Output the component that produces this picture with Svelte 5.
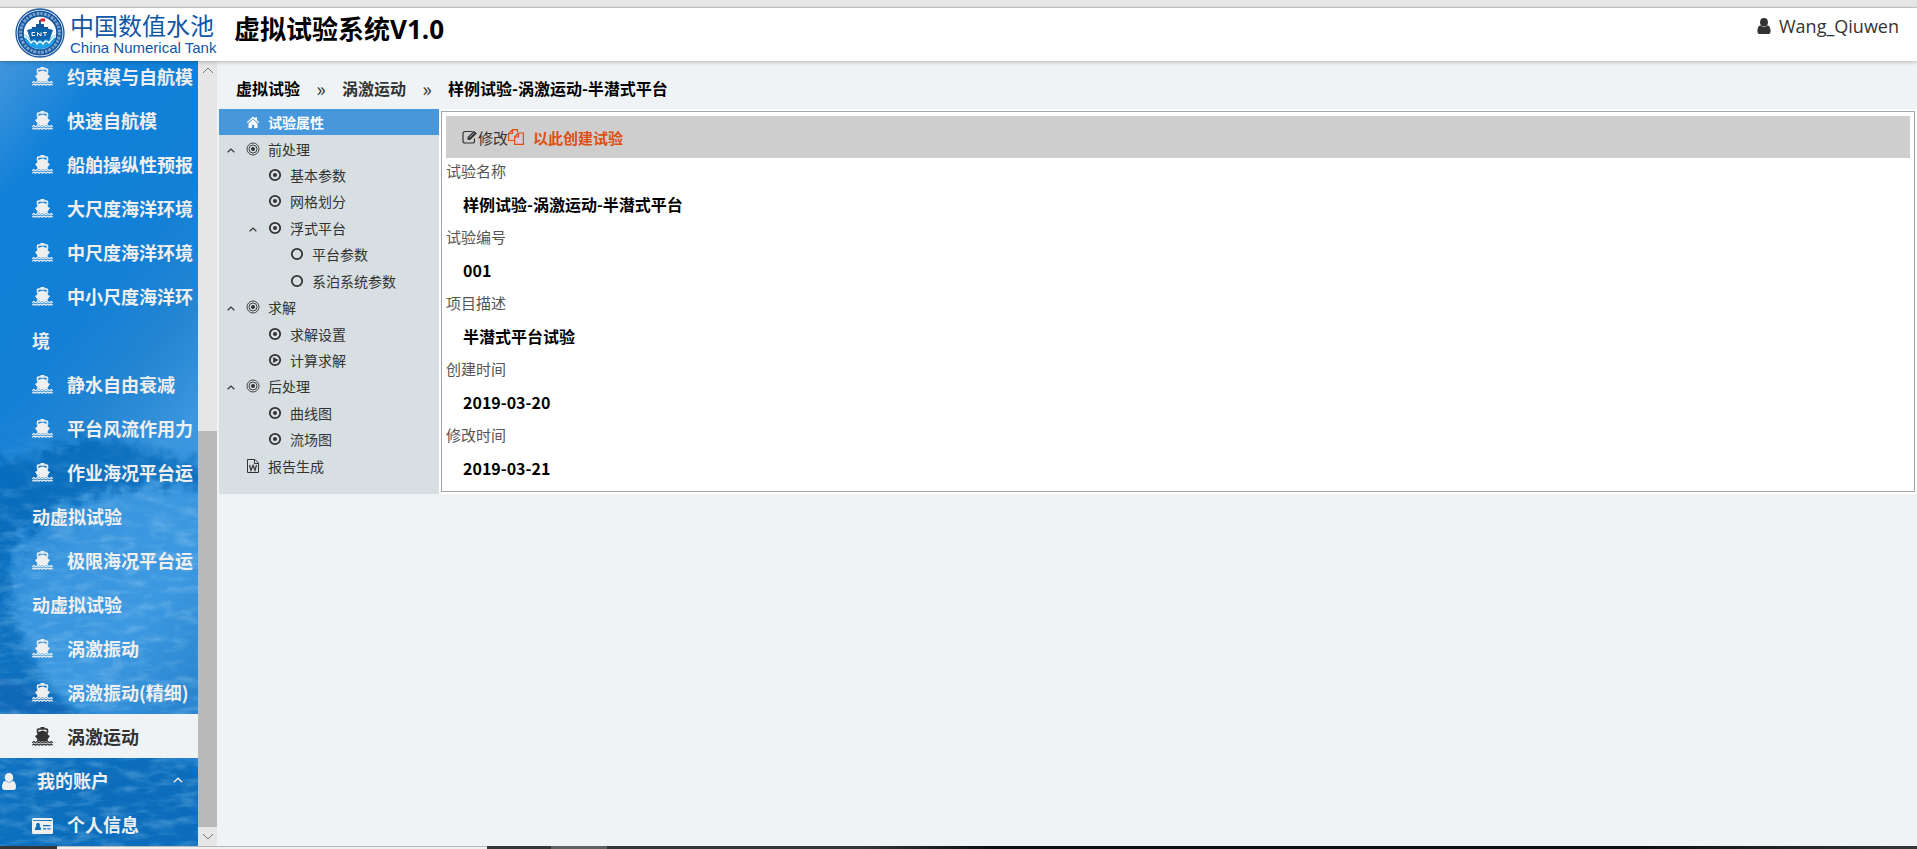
<script lang="ts">
  type MenuItem = { label: string; icon: string; active?: boolean; parent?: boolean };
  type TreeNode = { label: string; icon: string; depth: number; open?: boolean; active?: boolean };

  const menu: MenuItem[] = [
    { label: "约束模与自航模", icon: "ship" },
    { label: "快速自航模", icon: "ship" },
    { label: "船舶操纵性预报", icon: "ship" },
    { label: "大尺度海洋环境", icon: "ship" },
    { label: "中尺度海洋环境", icon: "ship" },
    { label: "中小尺度海洋环境", icon: "ship" },
    { label: "静水自由衰减", icon: "ship" },
    { label: "平台风流作用力", icon: "ship" },
    { label: "作业海况平台运动虚拟试验", icon: "ship" },
    { label: "极限海况平台运动虚拟试验", icon: "ship" },
    { label: "涡激振动", icon: "ship" },
    { label: "涡激振动(精细)", icon: "ship" },
    { label: "涡激运动", icon: "ship", active: true },
    { label: "我的账户", icon: "user", parent: true },
    { label: "个人信息", icon: "card" },
  ];

  const tree: TreeNode[] = [
    { label: "试验属性", icon: "home", depth: 0, active: true },
    { label: "前处理", icon: "target", depth: 0, open: true },
    { label: "基本参数", icon: "dot", depth: 1 },
    { label: "网格划分", icon: "dot", depth: 1 },
    { label: "浮式平台", icon: "dot", depth: 1, open: true },
    { label: "平台参数", icon: "ring", depth: 2 },
    { label: "系泊系统参数", icon: "ring", depth: 2 },
    { label: "求解", icon: "target", depth: 0, open: true },
    { label: "求解设置", icon: "dot", depth: 1 },
    { label: "计算求解", icon: "play", depth: 1 },
    { label: "后处理", icon: "target", depth: 0, open: true },
    { label: "曲线图", icon: "dot", depth: 1 },
    { label: "流场图", icon: "dot", depth: 1 },
    { label: "报告生成", icon: "word", depth: 0 },
  ];

  const fields = [
    ["试验名称", "样例试验-涡激运动-半潜式平台"],
    ["试验编号", "001"],
    ["项目描述", "半潜式平台试验"],
    ["创建时间", "2019-03-20"],
    ["修改时间", "2019-03-21"],
  ];
</script>

{#snippet icon(name: string)}
  {#if name === "ship"}
    <svg class="icon-ship" viewBox="0 0 21 19" fill="currentColor" aria-hidden="true">
      <path d="M8.500 0h4v1.300h2.300c1 0 1.400 1 1.500 2.200v2.300l-1.600-.6V3.700c0-.6-.3-1-.9-1H7.200c-.6 0-.9.400-.9 1v1.500l-1.600.6V3.500c.1-1.200.5-2.200 1.500-2.200h2.300z" />
      <path d="M10.500 3.400 15.800 5.200v2.600l2.200 1.100-2.300 3.400v1.900H5.300v-1.900L3 8.900l2.200-1.100V5.200z" />
      <path d="M.3 15.800l1.500-1.200 1.700 1.200 1.750-1.200 1.750 1.200 1.750-1.200 1.750 1.200 1.750-1.200 1.750 1.200 1.750-1.200 1.750 1.200 1.700-1.200 1.500 1.200M.3 18.200l1.500-1.200 1.700 1.200 1.750-1.200 1.750 1.200 1.750-1.200 1.750 1.200 1.750-1.200 1.750 1.200 1.750-1.200 1.750 1.200 1.700-1.200 1.500 1.200" fill="none" stroke="currentColor" stroke-width="1.200" />
    </svg>
  {:else if name === "user"}
    <svg class="icon-user" viewBox="0 0 14 17" fill="currentColor" aria-hidden="true">
      <ellipse cx="7" cy="4.500" rx="4.200" ry="4.500" />
      <path d="M3.300 7.800C1 8.500 0 10.800 0 14c0 2 1 3 2.500 3h9c1.500 0 2.500-1 2.500-3 0-3.200-1-5.500-3.300-6.200-2 2.300-5.400 2.300-7.400 0z" />
    </svg>
  {:else if name === "card"}
    <svg class="icon-card" viewBox="0 0 21 16" aria-hidden="true">
      <path fill="currentColor" fill-rule="evenodd" d="M1.500 0h18A1.500 1.500 0 0 1 21 1.500v13a1.500 1.500 0 0 1-1.500 1.500h-18A1.500 1.500 0 0 1 0 14.500v-13A1.500 1.500 0 0 1 1.500 0zM1 2v1h19V2zM3 12h6c0-2.600-.8-3.500-1.600-3.700a2 2 0 1 0-2.800 0C3.800 8.500 3 9.400 3 12zM11 7v1.200h7.500V7zm0 3.200v1.200h3.200v-1.200zm4.300 0v1.200h3.200v-1.200z" />
    </svg>
  {:else if name === "home"}
    <svg class="icon-tree" viewBox="0 0 14 14" fill="currentColor" aria-hidden="true">
      <path d="M7 1.500.8 7.200l.9.900L7 3.400l5.300 4.700.9-.9-2.200-2V2.200H9.200v1.300z" />
      <path d="M7 4.500 2.500 8.400V13h3.300V9.800h2.400V13h3.300V8.400z" />
    </svg>
  {:else if name === "target"}
    <svg class="icon-tree" viewBox="0 0 14 14" fill="none" stroke="currentColor" aria-hidden="true">
      <circle cx="7" cy="7" r="6" stroke-width="0.900" />
      <circle cx="7" cy="7" r="4" stroke-width="0.900" />
      <circle cx="7" cy="7" r="2" fill="currentColor" stroke="none" />
    </svg>
  {:else if name === "dot"}
    <svg class="icon-tree" viewBox="0 0 14 14" aria-hidden="true">
      <circle cx="7" cy="7" r="5.200" fill="none" stroke="currentColor" stroke-width="1.800" />
      <circle cx="7" cy="7" r="2" fill="currentColor" />
    </svg>
  {:else if name === "play"}
    <svg class="icon-tree" viewBox="0 0 14 14" aria-hidden="true">
      <circle cx="7" cy="7" r="5.200" fill="none" stroke="currentColor" stroke-width="1.800" />
      <path d="M5.200 3.900 10.400 7l-5.200 3.100z" fill="currentColor" />
    </svg>
  {:else if name === "ring"}
    <svg class="icon-tree" viewBox="0 0 14 14" aria-hidden="true">
      <circle cx="7" cy="7" r="5.200" fill="none" stroke="currentColor" stroke-width="1.800" />
    </svg>
  {:else if name === "word"}
    <svg class="icon-tree" viewBox="0 0 14 14" fill="none" stroke="currentColor" aria-hidden="true">
      <path d="M1.500.5h7.500l3.500 3.500v9.500h-11zM8.500.5v4h4" />
      <path d="M3.500 6 5 11.300l2-5 2 5L10.500 6" stroke-width="1.200" />
    </svg>
  {/if}
{/snippet}

{#snippet chevron()}
  <svg class="icon-chevron" viewBox="0 0 10 6" fill="none" stroke="currentColor" aria-hidden="true">
    <path d="M.8 5.200 5 1.200l4.200 4" stroke-width="1.500" />
  </svg>
{/snippet}

<div class="page">
  <div class="window-edge"></div>

  <header class="topbar">
    <div class="brand">
      <svg class="emblem" viewBox="0 0 50 50" aria-hidden="true">
        <circle cx="25" cy="25" r="24" fill="#fff" stroke="#1557a0" stroke-width="1.300" />
        <circle cx="25" cy="25" r="19.400" fill="none" stroke="#1557a0" stroke-width="6.400" />
        <circle cx="25" cy="25" r="19.400" fill="none" stroke="#cfe0f1" stroke-width="3" stroke-dasharray="2.200 1.400 3 1" opacity="0.550" />
        <circle cx="25" cy="25" r="15.800" fill="#fff" />
        <path d="M24 12h2v4h3v3h4v4H17v-4h4v-3h3z" fill="#1557a0" />
        <path d="M25.500 10.500h4.500v3h-4.500z" fill="#e8232a" />
        <path d="M12 22l7-2h12l7 2-4 12-9 5-9-5z" fill="#0e62ae" />
        <path d="M20 24.500h-3v3h3M22.500 28v-3.500l3.500 3.500v-3.500M28 24.500h4M30 24.500V28" fill="none" stroke="#fff" stroke-width="1" />
        <path d="M9 27c3 0 5 3 7 6 2-3 5-2 6 1 2-3 4-3 6 0 1-3 4-4 6-1 2-3 4-6 7-6-1 9-7 14-16 14S10 36 9 27z" fill="#20a0e4" />
        <path d="M9 28c4 1 5 5 7 7 2-3 5-2 6 1 2-3 4-3 6 0 1-3 4-4 6-1 2-2 3-6 7-7" fill="none" stroke="#fff" stroke-width="1.300" />
      </svg>
      <div class="brand-text">
        <span class="brand-cn">中国数值水池</span>
        <span class="brand-en">China Numerical Tank</span>
      </div>
    </div>
    <h1>虚拟试验系统V1.0</h1>
    <a class="account" href="#account">{@render icon("user")}Wang_Qiuwen</a>
  </header>

  <div class="body">
    <aside class="sidebar">
      <svg class="waves" viewBox="0 0 198 785" preserveAspectRatio="none" aria-hidden="true">
        <defs>
          <linearGradient id="sea" x1="0" y1="0" x2="0.300" y2="1">
            <stop offset="0" stop-color="#4296dc" />
            <stop offset="0.170" stop-color="#1080d8" />
            <stop offset="0.400" stop-color="#1280d6" />
            <stop offset="0.550" stop-color="#2485d2" />
            <stop offset="0.680" stop-color="#3a96de" />
            <stop offset="0.850" stop-color="#3c98e0" />
            <stop offset="1" stop-color="#2a86d0" />
          </linearGradient>
          <linearGradient id="fade" x1="0" y1="0" x2="0" y2="1">
            <stop offset="0.450" stop-color="#000" />
            <stop offset="0.600" stop-color="#fff" />
          </linearGradient>
          <mask id="lower"><rect width="198" height="785" fill="url(#fade)" /></mask>
          <filter id="soft" x="-20%" y="-20%" width="140%" height="140%">
            <feGaussianBlur stdDeviation="5" result="b" />
            <feTurbulence type="fractalNoise" baseFrequency="0.070" numOctaves="4" seed="4" />
            <feDisplacementMap in="b" scale="26" />
          </filter>
          <filter id="foam" x="0" y="0" width="100%" height="100%">
            <feTurbulence type="fractalNoise" baseFrequency="0.040 0.120" numOctaves="5" seed="9" />
            <feColorMatrix values="0 0 0 0 0.400  0 0 0 0 0.700  0 0 0 0 0.930  2.400 0 0 0 -1.050" />
          </filter>
        </defs>
        <rect width="198" height="785" fill="url(#sea)" />
        <g filter="url(#soft)" fill="#0865b5">
          <path d="M-30 400C10 390 40 410 60 385c20-20 60-5 90 5s50 10 70 20v25c-40-10-70-15-100-5-30 5-50 10-75 30-30 15-38 40-35 75 5 35 20 60 40 90l30 30H-30z" opacity="0.750" />
          <path d="M-30 610l60 15c40 20 60 30 90 45 40 20 70 35 110 50v100H-30z" opacity="0.750" />
        </g>
        <g mask="url(#lower)" opacity="0.300">
          <rect width="198" height="785" filter="url(#foam)" />
        </g>
      </svg>
      <nav class="menu" aria-label="主菜单">
        {#each menu as item}
          <a class:active={item.active} class:parent={item.parent} href="#menu">
            <span class="menu-icon">{@render icon(item.icon)}</span>{item.label}
            {#if item.parent}
              <span class="menu-arrow">{@render chevron()}</span>
            {/if}
          </a>
        {/each}
      </nav>
    </aside>

    <div class="scrollbar" aria-hidden="true">
      <svg class="scroll-arrow" viewBox="0 0 19 19" fill="none" stroke="#7a7a7a">
        <path d="M5 12l5-5 5 5" />
      </svg>
      <div class="scroll-track"><div class="scroll-thumb"></div></div>
      <svg class="scroll-arrow" viewBox="0 0 19 19" fill="none" stroke="#7a7a7a">
        <path d="M5 7l5 5 5-5" />
      </svg>
    </div>

    <main>
      <nav class="crumbs" aria-label="面包屑">
        <a href="#home">虚拟试验</a>
        <span class="sep">»</span>
        <a class="mid" href="#type">涡激运动</a>
        <span class="sep">»</span>
        <a href="#sample">样例试验-涡激运动-半潜式平台</a>
      </nav>

      <div class="workspace">
        <ul class="tree">
          {#each tree as node}
            <li class="depth-{node.depth}" class:active={node.active}>
              <span class="toggle">{#if node.open}{@render chevron()}{/if}</span>
              <a href="#node">{@render icon(node.icon)}{node.label}</a>
            </li>
          {/each}
        </ul>

        <section class="detail">
          <div class="frame">
            <div class="actions">
              <button class="edit">
                <svg viewBox="0 0 16 14" fill="none" stroke="currentColor" aria-hidden="true">
                  <path d="M10.500 1.500H3a2 2 0 0 0-2 2v7.500a2 2 0 0 0 2 2h7.500a2 2 0 0 0 2-2V8.500" stroke-width="1.200" />
                  <path d="M6 9.500V7.300l6-6 2.200 2.200-6 6z" fill="currentColor" />
                  <path d="M7.500 7.500l4.500-4.500" stroke="#cecece" stroke-width="0.700" />
                </svg>修改</button>
              <button class="copy">
                <svg viewBox="0 0 16 16" fill="none" stroke="currentColor" stroke-width="1.200" aria-hidden="true">
                  <path d="M6 11.500H.6V4.500L4.500.6h4.900v3M4.500.6v3.900H.6M6.600 8l3.900-4h4.900v11.400H6.600zM10.500 4v4H6.600" />
                </svg>以此创建试验</button>
            </div>
            <dl>
              {#each fields as [name, value]}
                <dt>{name}</dt>
                <dd>{value}</dd>
              {/each}
            </dl>
          </div>
        </section>
      </div>
    </main>
  </div>

  <div class="taskbar"><span class="task-window"></span><span class="task-active"></span></div>
</div>

<style>
  :global(body) {
    margin: 0;
  }

  .page {
    display: flex;
    flex-direction: column;
    height: 100vh;
    overflow: hidden;
    background: #eff3f6;
    color: #333;
    font-family: "Noto Sans CJK SC", "Noto Sans", sans-serif;
    font-size: 15px;
  }

  a {
    color: inherit;
    text-decoration: none;
  }

  svg {
    flex: none;
  }

  .window-edge {
    flex: none;
    height: 7px;
    border-bottom: 1px solid #c8c8c8;
    background: #e6e6e6;
  }

  .topbar {
    display: flex;
    align-items: flex-start;
    flex: none;
    position: relative;
    z-index: 2;
    height: 53px;
    padding: 0 18px 0 15px;
    background: #fff;
    box-shadow: 0 1px 4px rgb(0 0 0 / 0.25);
  }

  .brand {
    display: flex;
    gap: 5px;
    width: 219px;
    color: #0f56a5;
  }

  .emblem {
    width: 50px;
    height: 50px;
  }

  .brand-text {
    display: flex;
    flex-direction: column;
    padding-top: 3px;
    white-space: nowrap;
  }

  .brand-cn {
    font-size: 24px;
    line-height: 28px;
  }

  .brand-en {
    font-family: "Liberation Sans", Arial, sans-serif;
    font-size: 15px;
    line-height: 18px;
  }

  h1 {
    margin: 0;
    color: #000;
    font-family: "Open Sans", "Noto Sans CJK SC", sans-serif;
    font-size: 26px;
    line-height: 42px;
  }

  .account {
    display: flex;
    align-items: center;
    gap: 8px;
    margin-left: auto;
    font-family: "Open Sans", sans-serif;
    font-size: 18px;
    line-height: 36px;
  }

  .account .icon-user {
    width: 14px;
    height: 16px;
  }

  .body {
    display: flex;
    flex: 1;
    min-height: 0;
  }

  .sidebar {
    position: relative;
    flex: none;
    width: 198px;
    overflow: hidden;
    background: #1280d6;
  }

  .waves {
    position: absolute;
    inset: 0;
    width: 100%;
    height: 100%;
  }

  /* list is scrolled down a little */
  .menu {
    position: relative;
    margin-top: -7px;
    color: #efefef;
    font-size: 18px;
    font-weight: 700;
    line-height: 44px;
  }

  .menu a {
    display: block;
    padding-left: 32px;
    word-break: break-all;
  }

  .menu a.parent {
    display: flex;
    align-items: center;
    padding: 0 15px 0 2px;
  }

  .menu a.active {
    background: #eff3f6;
    color: #333;
  }

  .menu-icon {
    display: inline-block;
    width: 35px;
  }

  .menu-icon svg {
    vertical-align: -2px;
  }

  .menu-arrow {
    display: flex;
    margin-left: auto;
  }

  .icon-ship {
    width: 21px;
    height: 19px;
  }

  .icon-user {
    width: 14px;
    height: 17px;
  }

  .icon-card {
    width: 21px;
    height: 16px;
  }

  .icon-chevron {
    width: 10px;
    height: 6px;
  }

  .scrollbar {
    display: flex;
    flex-direction: column;
    flex: none;
    width: 19px;
    background: #e6e6e6;
  }

  .scroll-arrow {
    width: 19px;
    height: 19px;
  }

  .scroll-track {
    display: flex;
    flex-direction: column;
    justify-content: flex-end;
    flex: 1;
  }

  .scroll-thumb {
    height: 53%;
    background: #b9b9b9;
  }

  main {
    flex: 1;
    min-width: 0;
    padding-left: 2px;
  }

  .crumbs {
    display: flex;
    align-items: center;
    height: 48px;
    padding: 6px 0 0 17px;
    box-sizing: border-box;
    color: #000;
    font-size: 16px;
    font-weight: 700;
  }

  .crumbs .mid {
    color: #333;
  }

  .sep {
    width: 42px;
    color: #333;
    font-size: 20px;
    font-weight: 400;
    text-align: center;
  }

  .workspace {
    display: flex;
    background: #fff;
  }

  .tree {
    display: flex;
    flex-direction: column;
    flex: none;
    width: 220px;
    margin: 0;
    padding: 0 0 15px;
    box-sizing: border-box;
    background: #d7dfe2;
    font-size: 14px;
    line-height: 26px;
    list-style: none;
  }

  .tree li {
    display: flex;
    flex: 1;
    align-items: center;
    padding-left: 8px;
  }

  .tree li.depth-1 {
    padding-left: 30px;
  }

  .tree li.depth-2 {
    padding-left: 52px;
  }

  .tree li.active {
    background: #4797dd;
    color: #fff;
    font-weight: 700;
  }

  .tree a {
    display: flex;
    align-items: center;
    gap: 8px;
  }

  .toggle {
    display: flex;
    width: 19px;
    padding-top: 3px;
  }

  .toggle .icon-chevron {
    width: 8px;
    height: 5px;
  }

  .icon-tree {
    width: 14px;
    height: 14px;
  }

  .detail {
    flex: 1;
    min-width: 0;
    padding: 2px;
  }

  .frame {
    padding: 4px 4px 3px;
    border: 1px solid #a5a5a5;
  }

  .actions {
    display: flex;
    align-items: center;
    height: 42px;
    padding-left: 16px;
    background: #cecece;
  }

  button {
    display: flex;
    align-items: center;
    padding: 0;
    border: 0;
    background: none;
    color: #333;
    font: inherit;
    cursor: pointer;
  }

  .edit svg {
    width: 16px;
    height: 14px;
  }

  .copy {
    gap: 9px;
    color: #dd4f13;
    font-weight: 700;
  }

  .copy svg {
    width: 16px;
    height: 16px;
  }

  dl {
    margin: 0;
  }

  dt {
    color: #555;
    line-height: 26px;
  }

  dd {
    margin: 0;
    padding-left: 17px;
    color: #000;
    font-size: 16px;
    font-weight: 700;
    line-height: 40px;
  }

  .taskbar {
    display: flex;
    flex: none;
    height: 3px;
    padding-left: 57px;
    background: linear-gradient(90deg, #353637 45%, #0e0d11 52%, #0e0d11 85%, #353637);
  }

  .task-window {
    width: 430px;
    border-top: 1px solid #b9b9b9;
    background: #f0f0f0;
  }

  .task-active {
    width: 56px;
    margin-left: 64px;
    background: #606060;
  }
</style>
